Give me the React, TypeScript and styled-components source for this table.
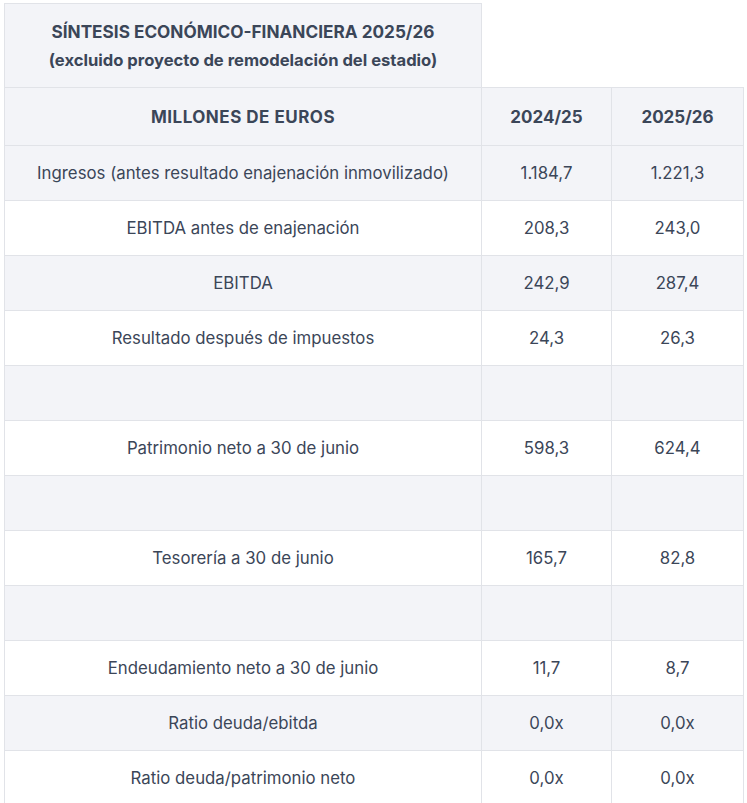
import React from "react";
import styled, { createGlobalStyle } from "styled-components";

const Global = createGlobalStyle`
  html, body { margin: 0; padding: 0; background: #ffffff; }
  body { font-family: Inter, "Noto Sans", sans-serif; color: #3b4658; }
`;

const Page = styled.div`
  padding: 3px 0 0 4px;
`;

const Table = styled.table`
  border-collapse: collapse;
  table-layout: fixed;
  width: 739px;
  font-size: 16px;
`;

const Col = styled.col<{ $w: number }>`
  width: ${(p) => p.$w}px;
`;

const TitleCell = styled.th`
  background: #f3f4f8;
  border: 1px solid #e1e3e8;
  height: 83px;
  padding: 0 10px;
  text-align: center;
  font-weight: 700;
  line-height: 28px;
  color: #3b4658;
`;

const TitleMain = styled.div`
  font-size: 17.2px;
`;

const TitleSub = styled.div`
  font-size: 16.6px;
`;

const HeadCell = styled.th<{ $wide?: boolean }>`
  background: #f3f4f8;
  border: 1px solid #e1e3e8;
  height: 55px;
  text-align: center;
  font-weight: 700;
  font-size: 17px;
  letter-spacing: ${(p) => (p.$wide ? "0.5px" : "0")};
  color: #3b4658;
`;

const Row = styled.tr<{ $shade: boolean }>`
  background: ${(p) => (p.$shade ? "#f3f4f8" : "#ffffff")};
`;

const Cell = styled.td`
  border: 1px solid #e1e3e8;
  height: 54px;
  padding: 0 8px;
  text-align: center;
  font-size: 16.8px;
  color: #3b4658;
`;

const rows: [string, string, string][] = [
  ["Ingresos (antes resultado enajenación inmovilizado)", "1.184,7", "1.221,3"],
  ["EBITDA antes de enajenación", "208,3", "243,0"],
  ["EBITDA", "242,9", "287,4"],
  ["Resultado después de impuestos", "24,3", "26,3"],
  ["", "", ""],
  ["Patrimonio neto a 30 de junio", "598,3", "624,4"],
  ["", "", ""],
  ["Tesorería a 30 de junio", "165,7", "82,8"],
  ["", "", ""],
  ["Endeudamiento neto a 30 de junio", "11,7", "8,7"],
  ["Ratio deuda/ebitda", "0,0x", "0,0x"],
  ["Ratio deuda/patrimonio neto", "0,0x", "0,0x"],
];

export default function App() {
  return (
    <Page>
      <Global />
      <Table>
        <colgroup>
          <Col $w={477} />
          <Col $w={130} />
          <Col $w={132} />
        </colgroup>
        <thead>
          <tr>
            <TitleCell>
              <TitleMain>SÍNTESIS ECONÓMICO-FINANCIERA 2025/26</TitleMain>
              <TitleSub>(excluido proyecto de remodelación del estadio)</TitleSub>
            </TitleCell>
          </tr>
          <tr>
            <HeadCell $wide>MILLONES DE EUROS</HeadCell>
            <HeadCell>2024/25</HeadCell>
            <HeadCell>2025/26</HeadCell>
          </tr>
        </thead>
        <tbody>
          {rows.map((r, i) => (
            <Row key={i} $shade={i % 2 === 0}>
              <Cell>{r[0]}</Cell>
              <Cell>{r[1]}</Cell>
              <Cell>{r[2]}</Cell>
            </Row>
          ))}
        </tbody>
      </Table>
    </Page>
  );
}
